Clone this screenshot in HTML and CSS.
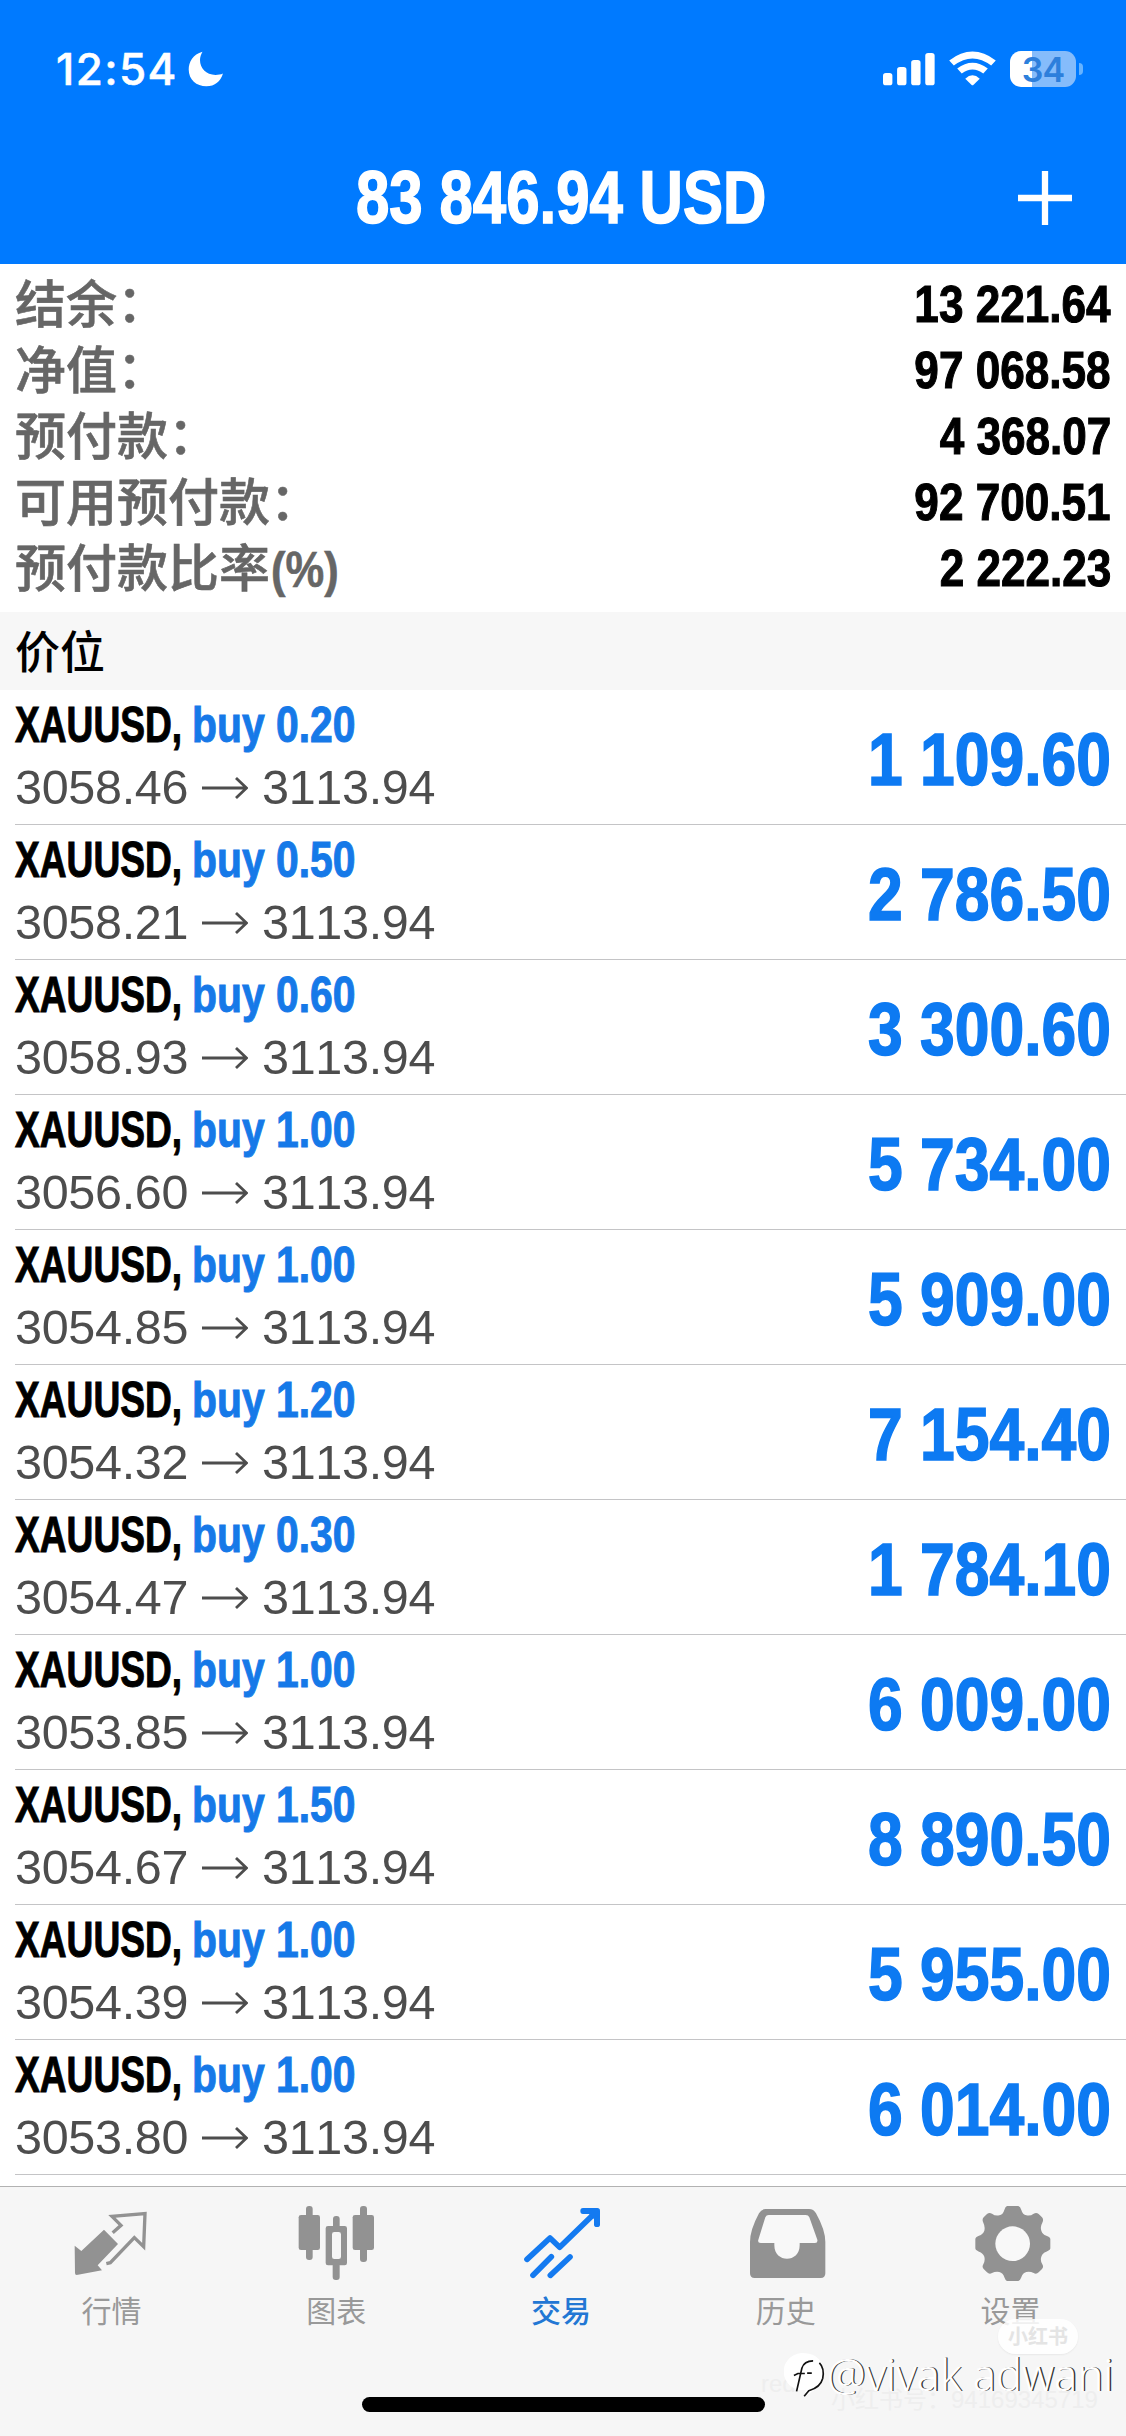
FILE: index.html
```
<!DOCTYPE html>
<html lang="zh-CN">
<head>
    <meta charset="UTF-8">
    <meta name="viewport" content="width=device-width, initial-scale=1.0">
    <title>交易</title>
    <link rel="stylesheet" href="styles.css">
</head>
<body>
    <header class="header">
        <div class="status-bar">
            <span class="time">12:54</span>
            <svg class="moon" viewBox="522 153 102 107" preserveAspectRatio="none"><path d="M563 155C536 162 524 186 524 208C524 238 546 258 574 258C598 258 615 243 621 220C615 223 608 224 600 224C573 224 556 204 556 180C556 171 559 162 563 155Z"/></svg>
            <div class="status-icons">
                <svg class="signal" viewBox="890 153 144 108" preserveAspectRatio="none">
                    <rect x="890" y="219" width="26" height="37" rx="8"/>
                    <rect x="929" y="201" width="26" height="55" rx="8"/>
                    <rect x="968" y="180" width="26" height="76" rx="8"/>
                    <rect x="1007" y="159" width="26" height="97" rx="8"/>
                </svg>
                <svg class="wifi" viewBox="1074 153 130 108" preserveAspectRatio="none">
                    <path d="M1081 189Q1139 141 1197 189" class="wave"/>
                    <path d="M1103 213Q1139 184 1175 213" class="wave"/>
                    <path d="M1119 236Q1139 216 1159 236L1142 254Q1139 257 1136 254Z"/>
                </svg>
                <div class="battery"><span>34</span></div>
            </div>
        </div>
        <div class="nav">
            <h1><span>83 846.94 USD</span></h1>
            <svg class="plus" viewBox="0 0 54 54"><path d="M27 0V54M0 27H54"/></svg>
        </div>
    </header>

    <section class="summary">
        <div class="line"><span class="label">结余<i>：</i></span><span class="value">13 221.64</span></div>
        <div class="line"><span class="label">净值<i>：</i></span><span class="value">97 068.58</span></div>
        <div class="line"><span class="label">预付款<i>：</i></span><span class="value">4 368.07</span></div>
        <div class="line"><span class="label">可用预付款<i>：</i></span><span class="value">92 700.51</span></div>
        <div class="line"><span class="label">预付款比率<b>(%)</b></span><span class="value">2 222.23</span></div>
    </section>

    <h2 class="section-title">价位</h2>
    <main class="positions" id="positions"></main>

    <footer class="tab-bar">
        <div class="tab">
            <svg viewBox="211 150 252 252">
                <path d="M313 239L355 282L294 346L307 361L231 375Q226 375 226 369L225 287L245 303Z"/>
                <path class="line8" d="M339 248L364 226L337 199L436 191L432 290L404 263L332 338L320 341"/>
            </svg>
            <span>行情</span>
        </div>
        <div class="tab">
            <svg viewBox="886 150 252 252">
                <rect x="919" y="168" width="20" height="162" rx="9"/>
                <rect x="897" y="195" width="64" height="105" rx="7"/>
                <rect x="1081" y="168" width="21" height="168" rx="9"/>
                <rect x="1059" y="195" width="64" height="105" rx="7"/>
                <rect x="1000" y="198" width="20" height="40" rx="9"/>
                <rect x="999" y="338" width="21" height="52" rx="9"/>
                <path fill-rule="evenodd" d="M985 228H1035Q1042 228 1042 235V339Q1042 346 1035 346H985Q978 346 978 339V235Q978 228 985 228ZM1004 246Q997 246 997 253V320Q997 327 1004 327H1017Q1024 327 1024 320V253Q1024 246 1017 246Z"/>
            </svg>
            <span>图表</span>
        </div>
        <div class="tab active">
            <svg viewBox="360 150 252 252">
                <path class="line16" d="M381 328L450 264L479 292L588 186M399 376L454 320M451 376L510 321"/>
                <path d="M549 174H592Q600 174 600 182V224Q600 231 591 231Q582 231 582 224V207L567 192H549Q541 192 541 183Q541 174 549 174Z"/>
            </svg>
            <span>交易</span>
        </div>
        <div class="tab">
            <svg viewBox="56 150 252 252">
                <path d="M118 177H248Q262 177 269 190Q297 240 297 276V370Q297 384 283 384H85Q71 384 71 370V276Q71 240 98 190Q105 177 118 177Z"/>
                <path class="hole" d="M127 195H238Q246 195 249 202L273 269Q275 279 266 279H220V286C220 340 144 340 144 286V279H103Q93 279 96 269L117 202Q120 195 127 195Z"/>
            </svg>
            <span>历史</span>
        </div>
        <div class="tab">
            <svg viewBox="731 150 252 252">
                <path d="M842 168H876Q882 170 885 180Q889 194 900 196Q912 199 922 191Q930 186 937 192L947 202Q953 208 948 218Q941 230 945 242Q948 253 960 257Q972 261 972 267V295Q972 301 960 305Q948 309 945 320Q941 331 948 343Q953 351 947 357L937 367Q930 374 922 369Q912 364 900 366Q889 369 885 382Q882 391 876 393H842Q837 391 834 382Q830 369 819 366Q807 364 797 369Q789 374 782 367L772 357Q766 351 771 343Q777 331 774 320Q770 309 758 305Q747 301 747 295V267Q747 261 758 257Q770 253 774 242Q777 230 771 218Q766 208 772 202L782 192Q789 186 797 191Q807 199 819 196Q830 194 834 180Q837 170 842 168Z"/>
                <circle class="hole" cx="859" cy="281" r="52"/>
            </svg>
            <span>设置</span>
        </div>
        <div class="home-indicator"></div>
        <div class="badge">小红书</div>
        <div class="faint faint-red">red</div>
        <div class="faint faint-id">小红书号：94169345719</div>
        <div class="watermark">
            <svg viewBox="170 610 130 145">
                <path class="disc" d="M235 617A57 57 0 0 1 291 674Q291 716 232 747L236 727A56 56 0 1 1 235 617Z"/>
                <path class="stroke" d="M208 732L224 662Q231 640 258 640M200 684L212 678H233M240 677H254M277 646Q293 662 287 693Q280 720 245 730L231 747"/>
            </svg>
            <span>@vivak adwani</span>
        </div>
    </footer>

    <script>
        const positions = [
            ['0.20', '3058.46', '1 109.60'],
            ['0.50', '3058.21', '2 786.50'],
            ['0.60', '3058.93', '3 300.60'],
            ['1.00', '3056.60', '5 734.00'],
            ['1.00', '3054.85', '5 909.00'],
            ['1.20', '3054.32', '7 154.40'],
            ['0.30', '3054.47', '1 784.10'],
            ['1.00', '3053.85', '6 009.00'],
            ['1.50', '3054.67', '8 890.50'],
            ['1.00', '3054.39', '5 955.00'],
            ['1.00', '3053.80', '6 014.00']
        ];

        document.getElementById('positions').innerHTML = positions.map(([lots, open, profit]) => `
            <div class="position">
                <div class="info">
                    <div class="deal"><span class="symbol">XAUUSD,</span><span class="lots">buy ${lots}</span></div>
                    <div class="prices"><span>${open}</span><svg class="arrow" viewBox="0 0 46 22"><path d="M0 11H44M34 1L44.5 11L34 21"/></svg><span>3113.94</span></div>
                </div>
                <div class="profit">${profit}</div>
            </div>`).join('');
    </script>
</body>
</html>
```
FILE: styles.css
```
* {
    box-sizing: border-box;
}
body {
    margin: 0;
    width: 1126px;
    height: 2436px;
    overflow: hidden;
    display: flex;
    flex-direction: column;
    background: #fff;
    font-family: "Liberation Sans", "Noto Sans CJK SC", sans-serif;
    font-kerning: none;
}
.header {
    height: 264px;
    flex: none;
    background: #007aff;
    color: #fff;
}
.status-bar {
    height: 146px;
    padding: 43px 43px 0 56px;
    display: flex;
    align-items: flex-start;
}
.time {
    width: 131px;
    line-height: 52px;
    font-family: Inter, sans-serif;
    font-size: 44px;
    font-weight: 500;
    letter-spacing: 1.4px;
    -webkit-text-stroke: 0.5px #fff;
}
.moon {
    width: 36px;
    height: 36px;
    margin-top: 8px;
    margin-left: 1px;
    fill: #fff;
}
.status-icons {
    margin-left: auto;
    margin-top: 8px;
    display: flex;
}
.status-icons svg {
    height: 36px;
    fill: #fff;
}
.signal {
    width: 52px;
    margin-right: 14px;
}
.wifi {
    width: 47px;
    margin-right: 14px;
}
.status-icons .wave {
    fill: none;
    stroke: #fff;
    stroke-width: 20;
}
.battery {
    position: relative;
    width: 66px;
    height: 36px;
    margin-right: 7px;
    border-radius: 11px;
    background: linear-gradient(90deg, #fff 22px, #85bcfb 22px);
    color: #2d7fdc;
    font: 600 34px/37px Inter, sans-serif;
    letter-spacing: -0.8px;
    text-align: center;
}
.battery::after {
    content: '';
    position: absolute;
    left: 69px;
    top: 12px;
    width: 4px;
    height: 12px;
    border-radius: 0 5px 5px 0;
    background: #66b3ff;
}
.nav {
    height: 103px;
    padding: 0 54px 0 356px;
    display: flex;
    align-items: center;
    justify-content: space-between;
}
.nav h1 {
    margin: 0;
    width: 420px;
    font-size: 75px;
    line-height: 105px;
    white-space: nowrap;
}
.nav h1 span {
    display: inline-block;
    transform: scaleX(0.8);
    transform-origin: left;
    -webkit-text-stroke: 1.6px #fff;
}
.plus {
    width: 54px;
    height: 54px;
    fill: none;
    stroke: #fff;
    stroke-width: 6.3;
}
.summary {
    height: 348px;
    padding: 7px 15px 0;
}
.line {
    height: 66px;
    display: flex;
    justify-content: space-between;
    line-height: 66px;
}
.label {
    color: #666;
    font-family: "Noto Sans CJK SC", sans-serif;
    font-size: 51px;
    font-weight: 500;
    margin-top: -3px;
    white-space: nowrap;
    -webkit-text-stroke: 0.6px #666;
}
.label i {
    font-style: normal;
    position: relative;
    top: -1px;
}
.label b {
    display: inline-block;
    font-family: "Liberation Sans", sans-serif;
    font-size: 50px;
    transform: scaleX(0.87);
    transform-origin: 8px 0;
}
.value {
    font-size: 52.5px;
    font-weight: bold;
    transform: scaleX(0.84);
    transform-origin: right;
    -webkit-text-stroke: 1.1px #000;
}
.section-title {
    margin: 0;
    height: 78px;
    padding-left: 15px;
    background: #f7f7f7;
    color: #000;
    font: 500 45px/76px "Noto Sans CJK SC", sans-serif;
}
.positions {
    flex: none;
    height: 1496px;
}
.position {
    height: 135px;
    margin-left: 15px;
    padding-right: 15px;
    border-bottom: 1px solid #c4c4c6;
    display: flex;
    justify-content: space-between;
}
.info {
    padding-top: 3px;
}
.deal {
    display: flex;
    height: 64px;
    line-height: 64px;
    font-size: 49.5px;
    font-weight: bold;
    white-space: nowrap;
}
.symbol {
    width: 177px;
    color: #000;
    transform: scaleX(0.75);
    transform-origin: left;
    -webkit-text-stroke: 1px #000;
}
.lots {
    color: #1679e8;
    transform: scaleX(0.825);
    transform-origin: left;
    -webkit-text-stroke: 1px #1679e8;
}
.prices {
    display: flex;
    align-items: center;
    height: 61px;
    line-height: 61px;
    font-size: 48.5px;
    letter-spacing: -0.3px;
    color: #4d4d4d;
}
.prices span {
    width: 175px;
}
.arrow {
    width: 46px;
    height: 22px;
    margin: 0 14px 0 12px;
    fill: none;
    stroke: #4d4d4d;
    stroke-width: 2.8;
}
.profit {
    color: #0d7af2;
    font-size: 75px;
    font-weight: bold;
    line-height: 139px;
    transform: scaleX(0.832);
    transform-origin: right;
    -webkit-text-stroke: 1.6px #0d7af2;
}
.tab-bar {
    position: relative;
    flex: 1;
    border-top: 1px solid #b2b2b2;
    background: #f6f6f6;
    display: flex;
    padding: 13px 2px 0 0;
}
.tab {
    flex: 1;
    display: flex;
    flex-direction: column;
    align-items: center;
    font: 400 30px/50px "Noto Sans CJK SC", sans-serif;
    color: #999;
}
.tab svg {
    width: 84px;
    height: 84px;
    fill: #929292;
}
.tab span {
    margin-right: 2px;
}
.tab.active {
    color: #2277d4;
    font-weight: 500;
}
.tab.active svg {
    fill: #147af0;
}
.tab svg .hole {
    fill: #f8f8f8;
}
.tab svg .line8 {
    fill: none;
    stroke: #929292;
    stroke-width: 10;
}
.tab svg .line16 {
    fill: none;
    stroke: #147af0;
    stroke-width: 17;
    stroke-linecap: round;
    stroke-linejoin: round;
}
.home-indicator {
    position: absolute;
    left: 362px;
    top: 210px;
    width: 403px;
    height: 15px;
    border-radius: 8px;
    background: #000;
}
.badge {
    position: absolute;
    left: 998px;
    top: 132px;
    width: 80px;
    height: 35px;
    border-radius: 18px;
    background: rgba(255, 255, 255, 0.85);
    box-shadow: 0 1px 2px rgba(0, 0, 0, 0.06);
    color: #e4e4e4;
    font: 700 20px/33px "Noto Sans CJK SC", sans-serif;
    text-align: center;
}
.faint {
    position: absolute;
    white-space: nowrap;
    color: #eeeeee;
    font: 24px/30px "Liberation Sans", "Noto Sans CJK SC", sans-serif;
}
.faint-red {
    left: 761px;
    top: 182px;
}
.faint-id {
    left: 831px;
    top: 198px;
}
.watermark {
    position: absolute;
    left: 784px;
    top: 164px;
    display: flex;
    color: #fff;
    font: 300 43.5px/46px "Noto Sans", sans-serif;
    white-space: nowrap;
    text-shadow: 1.3px 0 0 #333;
}
.watermark svg {
    width: 43px;
    height: 48px;
}
.disc {
    fill: #fff;
}
.stroke {
    fill: none;
    stroke: #111;
    stroke-width: 5;
}
```
